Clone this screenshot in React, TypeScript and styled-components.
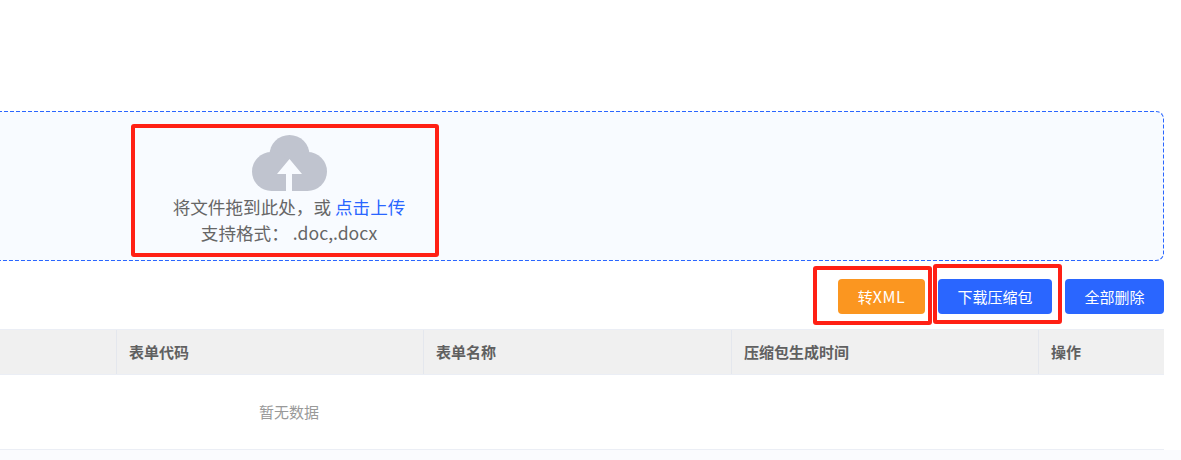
import styled, { createGlobalStyle } from "styled-components";

const GlobalStyle = createGlobalStyle`
  html, body {
    margin: 0;
    padding: 0;
    background: #fff;
    overflow: hidden;
  }
  body {
    font-family: "Noto Sans CJK SC", "Liberation Sans", sans-serif;
  }
`;

const columns = ["", "表单代码", "表单名称", "压缩包生成时间", "操作"];

const dashedBorder = encodeURIComponent(
  "<svg xmlns='http://www.w3.org/2000/svg' width='100%' height='100%'><rect width='100%' height='100%' fill='none' rx='8' ry='8' stroke='#2a66ff' stroke-width='2' stroke-dasharray='4 2'/></svg>"
);

export default function App() {
  return (
    <Screen>
      <GlobalStyle />
      <Content>
        <Dropzone>
          <CloudIcon viewBox="0 0 75 56">
            <circle cx="37.5" cy="20" r="20" fill="#c0c4cf" />
            <circle cx="19.5" cy="36.5" r="19.5" fill="#c0c4cf" />
            <circle cx="55.5" cy="36.5" r="19.5" fill="#c0c4cf" />
            <rect x="19.5" y="30" width="36" height="26" fill="#c0c4cf" />
            <path d="M37.5 24 L50 39 L40 39 L40 56 L34 56 L34 39 L25 39 Z" fill="#f8fbff" />
          </CloudIcon>
          <DropText>
            将文件拖到此处，或 <UploadLink>点击上传</UploadLink>
          </DropText>
          <DropText>支持格式： .doc,.docx</DropText>
        </Dropzone>

        <Toolbar>
          <ActionButton $color="#fb9620" $width={87}>
            转<LatinLabel>XML</LatinLabel>
          </ActionButton>
          <ActionButton $color="#2a66ff" $width={114}>下载压缩包</ActionButton>
          <ActionButton $color="#2a66ff" $width={99}>全部删除</ActionButton>
        </Toolbar>

        <TableHead>
          {columns.map((name, i) => (
            <HeadCell key={i}>{name}</HeadCell>
          ))}
        </TableHead>
        <EmptyRow>暂无数据</EmptyRow>
      </Content>
      <BottomStrip />

      <Annotation $left={131} $top={124} $width={308} $height={133} />
      <Annotation $left={813} $top={266} $width={119} $height={59} />
      <Annotation $left={933} $top={264} $width={129} $height={60} />
    </Screen>
  );
}

const Screen = styled.div`
  position: relative;
  width: 1181px;
  height: 460px;
  overflow: hidden;
  background: #fff;
`;

const Content = styled.div`
  width: 1750px;
  margin-left: -586px;
  padding-top: 111px;
`;

const Dropzone = styled.div`
  box-sizing: border-box;
  height: 150px;
  padding-top: 24px;
  display: flex;
  flex-direction: column;
  align-items: center;
  background-color: #f8fbff;
  background-image: url("data:image/svg+xml,${dashedBorder}");
  border-radius: 8px;
`;

const CloudIcon = styled.svg`
  width: 75px;
  height: 56px;
  display: block;
  margin-bottom: 3px;
`;

const DropText = styled.div`
  font-size: 17.6px;
  line-height: 26px;
  color: #666;
  white-space: pre;
`;

const UploadLink = styled.span`
  color: #2a66ff;
`;

const Toolbar = styled.div`
  display: flex;
  justify-content: flex-end;
  gap: 13px;
  margin-top: 18px;
`;

const ActionButton = styled.div<{ $color: string; $width: number }>`
  width: ${(p) => p.$width}px;
  height: 35px;
  padding-bottom: 1px;
  box-sizing: border-box;
  display: flex;
  align-items: center;
  justify-content: center;
  border-radius: 4px;
  background: ${(p) => p.$color};
  color: #fff;
  font-size: 15px;
`;

const LatinLabel = styled.span`
  font-size: 16px;
  letter-spacing: 0.5px;
`;

const TableHead = styled.div`
  display: grid;
  grid-template-columns: 703px 307px 308px 307px 125px;
  height: 46px;
  margin-top: 15px;
  box-sizing: border-box;
  background: #f0f0f0;
  border-top: 1px solid #ebeef5;
  border-bottom: 1px solid #ebeef5;
`;

const HeadCell = styled.div`
  box-sizing: border-box;
  padding-left: 12px;
  padding-bottom: 2px;
  display: flex;
  align-items: center;
  font-size: 15px;
  font-weight: 700;
  color: #606060;
  border-right: 1px solid #e4e7ed;

  &:last-child {
    border-right: none;
  }
`;

const EmptyRow = styled.div`
  height: 75px;
  padding-bottom: 2px;
  box-sizing: border-box;
  display: flex;
  align-items: center;
  justify-content: center;
  font-size: 15px;
  color: #999;
  border-bottom: 1px solid #ebeef5;
`;

const BottomStrip = styled.div`
  height: 10px;
  background: #fafbfe;
`;

const Annotation = styled.div<{ $left: number; $top: number; $width: number; $height: number }>`
  position: absolute;
  left: ${(p) => p.$left}px;
  top: ${(p) => p.$top}px;
  width: ${(p) => p.$width}px;
  height: ${(p) => p.$height}px;
  box-sizing: border-box;
  border: 4px solid #ff2015;
  border-radius: 3px;
`;
